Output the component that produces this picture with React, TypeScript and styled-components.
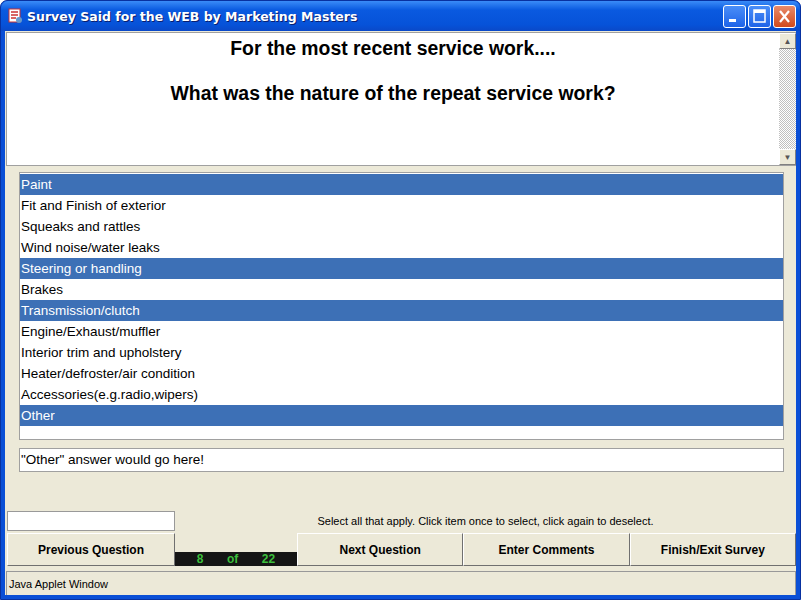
import React from 'react';
import styled, { createGlobalStyle } from 'styled-components';

const GlobalStyle = createGlobalStyle`
  html, body { margin: 0; padding: 0; background: #fff; }
  body { font-family: "Liberation Sans", Arial, sans-serif; }
`;

const items = [
  { label: 'Paint', selected: true },
  { label: 'Fit and Finish of exterior', selected: false },
  { label: 'Squeaks and rattles', selected: false },
  { label: 'Wind noise/water leaks', selected: false },
  { label: 'Steering or handling', selected: true },
  { label: 'Brakes', selected: false },
  { label: 'Transmission/clutch', selected: true },
  { label: 'Engine/Exhaust/muffler', selected: false },
  { label: 'Interior trim and upholstery', selected: false },
  { label: 'Heater/defroster/air condition', selected: false },
  { label: 'Accessories(e.g.radio,wipers)', selected: false },
  { label: 'Other', selected: true },
];

const App = () => (
  <>
    <GlobalStyle />
    <Window>
      <TitleBar>
        <TitleIcon>
          <svg width="16" height="16" viewBox="0 0 16 16">
            <rect x="2" y="1" width="11" height="13" fill="#fff" stroke="#c33" />
            <path d="M4 4h7M4 7h7M4 10h5" stroke="#c33" strokeWidth="1.5" />
            <circle cx="12" cy="12" r="3" fill="#69c" />
          </svg>
        </TitleIcon>
        <TitleText>Survey Said for the WEB by Marketing Masters</TitleText>
        <WinButtons>
          <WinButton>
            <svg width="21" height="21" viewBox="0 0 21 21"><rect x="5" y="13" width="7" height="3" fill="#fff" /></svg>
          </WinButton>
          <WinButton>
            <svg width="21" height="21" viewBox="0 0 21 21"><rect x="5" y="4" width="11" height="12" fill="none" stroke="#fff" strokeWidth="1.5" /><rect x="5" y="4" width="11" height="3" fill="#fff" /></svg>
          </WinButton>
          <WinButton close>
            <svg width="21" height="21" viewBox="0 0 21 21"><path d="M6 5l9 11M15 5l-9 11" stroke="#fff" strokeWidth="2.2" /></svg>
          </WinButton>
        </WinButtons>
      </TitleBar>
      <Body>
        <QuestionPanel>
          <QuestionText>
            <p>For the most recent service work....</p>
            <p>What was the nature of the repeat service work?</p>
          </QuestionText>
          <ScrollBar>
            <ScrollArrow>▲</ScrollArrow>
            <ScrollTrack />
            <ScrollArrow>▼</ScrollArrow>
          </ScrollBar>
        </QuestionPanel>
        <ListArea>
          <ListBox>
            {items.map((it) => (
              <Row key={it.label} selected={it.selected}>{it.label}</Row>
            ))}
          </ListBox>
          <OtherField>"Other" answer would go here!</OtherField>
        </ListArea>
        <InfoRow>
          <SmallField />
          <Hint>Select all that apply. Click item once to select, click again to deselect.</Hint>
        </InfoRow>
        <ButtonRow>
          <NavButton>Previous Question</NavButton>
          <Counter>
            <CounterDisplay>
              <span>8</span><span>of</span><span>22</span>
            </CounterDisplay>
          </Counter>
          <NavButton>Next Question</NavButton>
          <NavButton>Enter Comments</NavButton>
          <NavButton>Finish/Exit Survey</NavButton>
        </ButtonRow>
        <StatusBar>Java Applet Window</StatusBar>
      </Body>
    </Window>
  </>
);

const Window = styled.div`
  width: 801px;
  height: 600px;
  box-sizing: border-box;
  background: #0a4fd6;
  border: 1px solid #0831a0;
  border-radius: 7px 7px 0 0;
  display: flex;
  flex-direction: column;
  padding: 0 4px 4px 4px;
`;

const TitleBar = styled.div`
  height: 30px;
  display: flex;
  align-items: center;
  background: linear-gradient(#3a8cf8, #0a5ae0 30%, #0652d8 80%, #0a49c8);
  margin: 0 -4px;
  padding: 0 4px 0 6px;
  border-radius: 7px 7px 0 0;
  flex-shrink: 0;
`;

const TitleIcon = styled.div`
  width: 16px;
  height: 16px;
  margin-right: 4px;
`;

const TitleText = styled.div`
  flex: 1;
  color: #fff;
  font-family: "DejaVu Sans", sans-serif;
  font-weight: bold;
  font-size: 12.5px;
  text-shadow: 1px 1px #0a1e6e;
`;

const WinButtons = styled.div`
  display: flex;
  gap: 2px;
`;

const WinButton = styled.div<{ close?: boolean }>`
  width: 21px;
  height: 21px;
  border: 1px solid #fff;
  border-radius: 3px;
  background: ${(p) => (p.close ? 'linear-gradient(#e88a6a, #d24a1c)' : 'linear-gradient(#4a8ef8, #1e63e8)')};
  display: flex;
`;

const Body = styled.div`
  flex: 1;
  background: #ece9d8;
  display: flex;
  flex-direction: column;
`;

const QuestionPanel = styled.div`
  height: 132px;
  margin: 1px 0 0 1px;
  display: flex;
  background: #fff;
  border: 1px solid #a0a0a0;
  border-right: none;
`;

const QuestionText = styled.div`
  flex: 1;
  text-align: center;
  font-weight: bold;
  font-size: 19.4px;
  color: #000;
  p { margin: 4px 0 22px; }
`;

const ScrollBar = styled.div`
  width: 17px;
  display: flex;
  flex-direction: column;
  background: #ece9d8;
`;

const ScrollArrow = styled.div`
  height: 16px;
  font-size: 8px;
  color: #555;
  display: flex;
  align-items: center;
  justify-content: center;
  background: #ece9d8;
  border: 1px solid #fff;
  border-right-color: #808080;
  border-bottom-color: #808080;
  box-sizing: border-box;
`;

const ScrollTrack = styled.div`
  flex: 1;
  background: repeating-conic-gradient(#fff 0 25%, #c0c0c0 0 50%) 0 0 / 2px 2px;
`;

const ListArea = styled.div`
  padding: 6px 12px 0 14px;
  display: flex;
  flex-direction: column;
  gap: 8px;
`;

const ListBox = styled.div`
  height: 268px;
  background: #fff;
  border: 1px solid #a0a0a0;
  padding-top: 1px;
  box-sizing: border-box;
`;

const Row = styled.div<{ selected: boolean }>`
  height: 21px;
  line-height: 21px;
  padding-left: 1px;
  font-size: 13.5px;
  background: ${(p) => (p.selected ? '#3d70b6' : '#fff')};
  color: ${(p) => (p.selected ? '#fff' : '#000')};
`;

const OtherField = styled.div`
  height: 24px;
  line-height: 22px;
  box-sizing: border-box;
  border: 1px solid #a0a0a0;
  background: #fff;
  font-size: 13.5px;
  padding-left: 1px;
`;

const InfoRow = styled.div`
  margin-top: 39px;
  display: flex;
  align-items: center;
  padding-left: 2px;
`;

const SmallField = styled.div`
  width: 168px;
  height: 20px;
  box-sizing: border-box;
  border: 1px solid #999;
  background: #fff;
`;

const Hint = styled.div`
  flex: 1;
  text-align: center;
  font-size: 11px;
`;

const ButtonRow = styled.div`
  margin-top: 2px;
  height: 33px;
  display: flex;
  padding-left: 2px;
`;

const NavButton = styled.div`
  flex: 1;
  display: flex;
  align-items: center;
  justify-content: center;
  font-weight: bold;
  font-size: 12px;
  background: #ece9d8;
  border: 1px solid #fff;
  border-right-color: #707070;
  border-bottom-color: #707070;
  &:first-child { flex: 0 0 166px; }
`;

const Counter = styled.div`
  width: 122px;
  display: flex;
  flex-direction: column;
  justify-content: flex-end;
`;

const CounterDisplay = styled.div`
  height: 14px;
  background: #151515;
  color: #3cbf3c;
  font-weight: bold;
  font-size: 12px;
  display: flex;
  justify-content: space-around;
  align-items: center;
  padding: 0 10px;
`;

const StatusBar = styled.div`
  margin: 5px 0 0 1px;
  flex: 1;
  border: 1px solid #999;
  border-bottom: none;
  font-size: 11px;
  display: flex;
  align-items: center;
  padding-left: 2px;
`;

export default App;
